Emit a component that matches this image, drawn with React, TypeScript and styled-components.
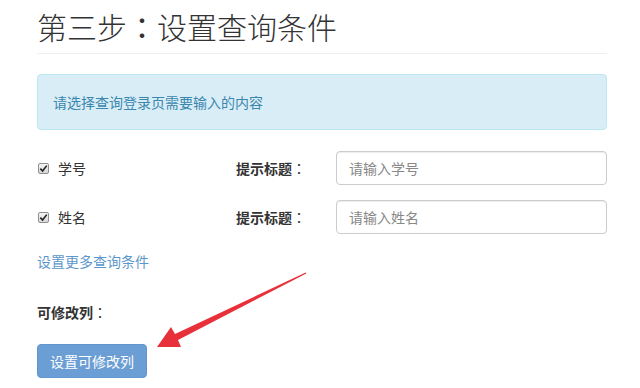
import React from "react";
import styled, { createGlobalStyle } from "styled-components";

const GlobalStyle = createGlobalStyle`
  html, body {
    margin: 0;
    padding: 0;
    background: #fff;
  }
  body {
    font-family: "Noto Sans CJK SC", "Liberation Sans", sans-serif;
    font-size: 14px;
    color: #333;
  }
`;

const fields = [
  { name: "学号", placeholder: "请输入学号" },
  { name: "姓名", placeholder: "请输入姓名" },
];

const App = () => {
  return (
    <Page>
      <GlobalStyle />
      <Content>
        <Heading>
          第三步<Colon>：</Colon>设置查询条件
        </Heading>
        <Alert>请选择查询登录页需要输入的内容</Alert>
        <Fields>
          {fields.map((f) => (
            <FieldRow key={f.name}>
              <CheckCell>
                <CheckBox>
                  <svg viewBox="0 0 10 10" width={9} height={9} aria-hidden="true">
                    <path d="M1.5 5.2 L4 7.8 L8.6 1.8" fill="none" stroke="#222" strokeWidth={1.8} />
                  </svg>
                </CheckBox>
                {f.name}
              </CheckCell>
              <HintLabel>
                提示标题<Colon>：</Colon>
              </HintLabel>
              <TextInput placeholder={f.placeholder} />
            </FieldRow>
          ))}
        </Fields>
        <MoreLink href="#">设置更多查询条件</MoreLink>
        <SectionLabel>
          可修改列<Colon>：</Colon>
        </SectionLabel>
        <PrimaryButton>设置可修改列</PrimaryButton>
      </Content>
      <Arrow viewBox="0 0 640 388" aria-hidden="true">
        <polygon
          points="157,347 181,347 178,340 306.3,273.5 305.7,272.5 175,334 171,327"
          fill="#e8303a"
        />
      </Arrow>
    </Page>
  );
};

export default App;

const Page = styled.div`
  position: relative;
  width: 640px;
  height: 388px;
  overflow: hidden;
`;

const Content = styled.div`
  width: 570px;
  padding-left: 37px;
  display: flex;
  flex-direction: column;
  align-items: flex-start;
`;

// full-width colon centred in its cell, as the original font draws it
const Colon = styled.span`
  font-family: "Noto Sans CJK JP", "Noto Sans CJK TC", sans-serif;
  font-weight: 400;
`;

const Heading = styled.h1`
  align-self: stretch;
  margin: 0;
  padding: 8px 0 9px;
  font-size: 30px;
  line-height: 36px;
  font-weight: 300;
  color: #333;
  border-bottom: 1px solid #eee;
`;

const Alert = styled.div`
  align-self: stretch;
  margin-top: 20px;
  padding: 17px 15px;
  line-height: 20px;
  font-size: 14px;
  color: #3a87ad;
  background: #d9edf7;
  border: 1px solid #bce8f1;
  border-radius: 4px;
`;

const Fields = styled.div`
  align-self: stretch;
  margin-top: 21px;
  display: flex;
  flex-direction: column;
  gap: 15px;
`;

const FieldRow = styled.div`
  display: grid;
  grid-template-columns: 199px 100px 1fr;
  align-items: center;
  height: 34px;
`;

const CheckCell = styled.label`
  display: flex;
  align-items: center;
  gap: 9px;
  padding-left: 1px;
  color: #333;
`;

const CheckBox = styled.span`
  width: 11px;
  height: 11px;
  box-sizing: border-box;
  border: 1px solid #8f8f8f;
  border-radius: 2px;
  background: linear-gradient(#f4f4f4, #d8d8d8);
  display: flex;
  align-items: center;
  justify-content: center;
`;

const HintLabel = styled.span`
  font-weight: 700;
  color: #333;
`;

const TextInput = styled.input`
  height: 34px;
  box-sizing: border-box;
  padding: 6px 12px;
  font-family: inherit;
  font-size: 14px;
  color: #555;
  border: 1px solid #ccc;
  border-radius: 4px;
  box-shadow: inset 0 1px 1px rgba(0, 0, 0, 0.075);
  outline: none;

  &::placeholder {
    color: #888;
  }
`;

const MoreLink = styled.a`
  margin-top: 17px;
  line-height: 20px;
  color: #5b97cb;
  text-decoration: none;
`;

const SectionLabel = styled.div`
  margin-top: 31px;
  line-height: 20px;
  font-weight: 700;
  color: #333;
`;

const PrimaryButton = styled.button`
  margin-top: 22px;
  height: 34px;
  padding: 6px 12px;
  font-family: inherit;
  font-size: 14px;
  line-height: 20px;
  color: #fff;
  background: #6b9ed4;
  border: 1px solid #6196cc;
  border-radius: 4px;
  cursor: pointer;
`;

const Arrow = styled.svg`
  position: absolute;
  left: 0;
  top: 0;
  width: 640px;
  height: 388px;
  pointer-events: none;
`;
